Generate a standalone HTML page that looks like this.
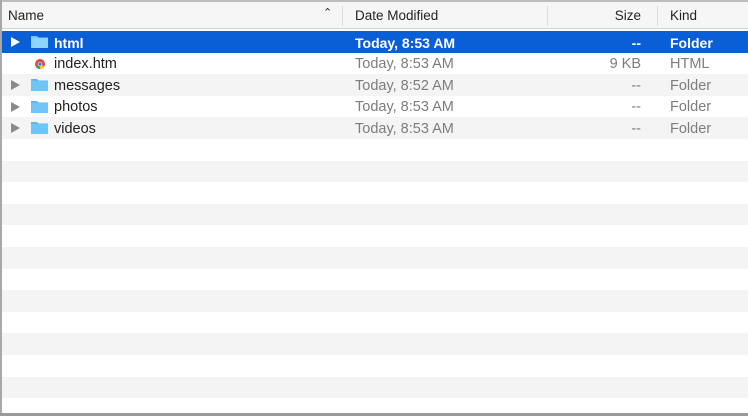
<!DOCTYPE html><html><head><style>
body{margin:0;width:748px;height:416px;overflow:hidden;background:#fff;font-family:"Liberation Sans",Helvetica,sans-serif;font-size:14.5px;position:relative}
.top{position:absolute;left:0;top:0;width:748px;height:2px;background:#bdbdbd}
.lb{position:absolute;left:0;top:0;width:2px;height:416px;background:#a8a8a8;z-index:3}
.bb{position:absolute;left:0;top:413px;width:748px;height:3px;background:#9a9a9a;z-index:3}
.hdr{position:absolute;left:0;top:2px;width:748px;height:26px;background:#f6f6f6;border-bottom:1px solid #d4d4d4;color:#222;font-size:13.5px}
.hdr span{position:absolute;top:6px}
.sep{position:absolute;top:4px;width:1px;height:20px;background:#dcdcdc}
.row{position:absolute;left:0;width:748px;height:21.6px;color:#222}
.row.g{background:#f4f4f4}
.row.sel{background:#0b5fd6;color:#fff;font-weight:bold;font-size:14px}
.row span{position:absolute;top:3.5px}
.d{left:355px;color:#7d7d7d}.s{right:107px;color:#7d7d7d;text-align:right}.k{left:670px;color:#7d7d7d}
.sel .d,.sel .s,.sel .k{color:#fff}
.tri{position:absolute;left:11px;top:6px;width:0;height:0;border-left:9px solid #8a8a8a;border-top:5px solid transparent;border-bottom:5px solid transparent}
.sel .tri{border-left-color:#fff}
.fold{position:absolute;left:31px;top:4px;width:17px;height:13px}
.n{left:54px}
</style></head><body>
<div class="top"></div><div class="lb"></div><div class="bb"></div>
<div class="hdr"><span style="left:8px">Name</span><span style="left:323px;top:4px;font-size:11px">&#8963;</span>
<div class="sep" style="left:342px"></div><span style="left:355px">Date Modified</span>
<div class="sep" style="left:547px"></div><span style="right:107px">Size</span>
<div class="sep" style="left:657px"></div><span style="left:670px">Kind</span></div>
<div class="row sel" style="top:31px"><div class="tri"></div><svg class="fold" viewBox="0 0 17 13"><path d="M0 1h6l1.5 1.5H17V13H0z" fill="#78c6f5"/><rect x="0" y="3" width="17" height="10" fill="#8fd2fa"/></svg><span class="n">html</span><span class="d">Today, 8:53 AM</span><span class="s">--</span><span class="k">Folder</span></div>
<div class="row" style="top:52.6px"><svg style="position:absolute;left:35px;top:6px" width="10" height="10" viewBox="0 0 10 10"><circle cx="5" cy="5" r="5" fill="#e0463a"/><path d="M5 5L0.7 7.5A5 5 0 0 0 5 10z" fill="#2da94f"/><path d="M5 5L5 10A5 5 0 0 0 9.3 7.5z" fill="#f7c325"/><circle cx="5" cy="5" r="2.3" fill="#fff"/><circle cx="5" cy="5" r="1.7" fill="#3b79e0"/></svg><span class="n">index.htm</span><span class="d">Today, 8:53 AM</span><span class="s">9 KB</span><span class="k">HTML</span></div>
<div class="row g" style="top:74.2px"><div class="tri"></div><svg class="fold" viewBox="0 0 17 13"><path d="M0 1h6l1.5 1.5H17V13H0z" fill="#5bb8f0"/><rect x="0" y="3" width="17" height="10" fill="#6ec5f7"/></svg><span class="n">messages</span><span class="d">Today, 8:52 AM</span><span class="s">--</span><span class="k">Folder</span></div>
<div class="row" style="top:95.8px"><div class="tri"></div><svg class="fold" viewBox="0 0 17 13"><path d="M0 1h6l1.5 1.5H17V13H0z" fill="#5bb8f0"/><rect x="0" y="3" width="17" height="10" fill="#6ec5f7"/></svg><span class="n">photos</span><span class="d">Today, 8:53 AM</span><span class="s">--</span><span class="k">Folder</span></div>
<div class="row g" style="top:117.4px"><div class="tri"></div><svg class="fold" viewBox="0 0 17 13"><path d="M0 1h6l1.5 1.5H17V13H0z" fill="#5bb8f0"/><rect x="0" y="3" width="17" height="10" fill="#6ec5f7"/></svg><span class="n">videos</span><span class="d">Today, 8:53 AM</span><span class="s">--</span><span class="k">Folder</span></div>
<div class="row g" style="top:160.6px"></div>
<div class="row g" style="top:203.8px"></div>
<div class="row g" style="top:247px"></div>
<div class="row g" style="top:290.2px"></div>
<div class="row g" style="top:333.4px"></div>
<div class="row g" style="top:376.6px"></div>
</body></html>
